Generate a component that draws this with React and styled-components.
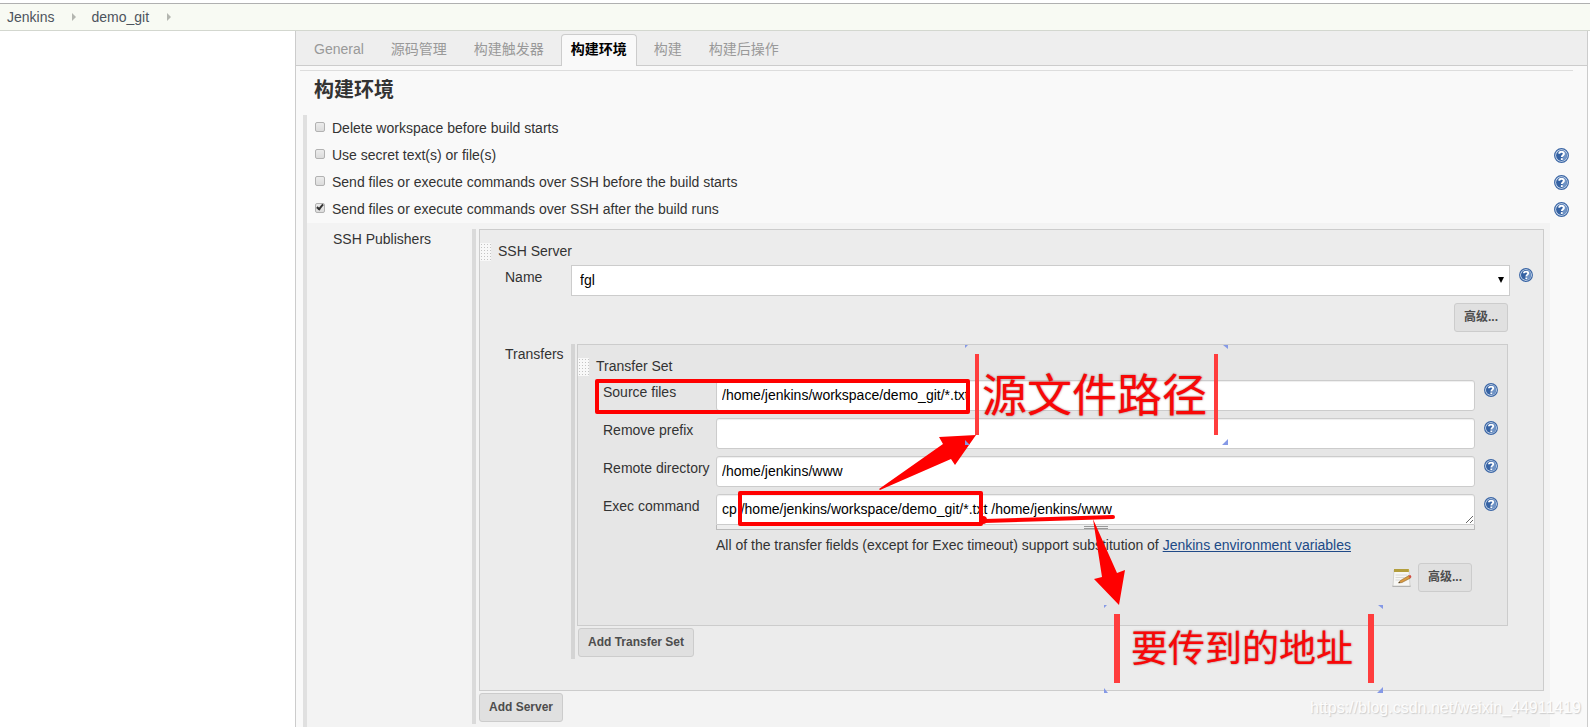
import React from "react";
import styled, { createGlobalStyle, css } from "styled-components";

const GlobalStyle = createGlobalStyle`
  *, *::before, *::after { box-sizing: border-box; }
  html, body, #root { margin: 0; }
  body {
    background: #fff;
    color: #333;
    font: 14px/18px "Liberation Sans", "Noto Sans CJK SC", sans-serif;
  }
  button, input, select, textarea { font: inherit; margin: 0; }
`;

const Page = styled.div`
  position: relative;
  display: flex;
  flex-direction: column;
  min-height: 100vh;
  padding-top: 3px;
  overflow: hidden;
`;

const Breadcrumbs = styled.nav`
  display: flex;
  align-items: center;
  height: 28px;
  padding-left: 7px;
  background: #f8faf3;
  border-top: 1px solid #b0b0b0;
  border-bottom: 1px solid #d3d7cf;
`;

const Crumb = styled.a`
  color: #4d545d;
  text-decoration: none;
`;

const CrumbArrow = styled.span`
  margin: 0 15px 0 18px;
  border-left: 4px solid #b4b6b0;
  border-top: 4px solid transparent;
  border-bottom: 4px solid transparent;
`;

const Columns = styled.div`
  display: flex;
  flex: 1;
`;

const SidePanel = styled.aside`
  flex: none;
  width: 295px;
`;

const MainPanel = styled.main`
  display: flex;
  flex-direction: column;
  flex: 1;
  min-width: 0;
  margin-right: 2px;
  background: #f9f9f9;
  border: solid #ccc;
  border-width: 0 1px;
`;

const TabBar = styled.div`
  display: flex;
  align-items: flex-end;
  gap: 7px;
  height: 35px;
  padding-left: 8px;
  background: #eee;
  border-bottom: 1px solid #ccc;
`;

const Tab = styled.button`
  height: 32px;
  margin-bottom: -1px;
  padding: 0 9px 4px;
  border: 1px solid transparent;
  border-bottom: 0;
  border-radius: 4px 4px 0 0;
  background: none;
  color: #999;
  ${(p) =>
    p.$active &&
    css`
      background: #f9f9f9;
      border-color: #ccc;
      color: #000;
      font-weight: bold;
    `}
`;

const Rule = styled.hr`
  width: auto;
  margin: 4px 14px 0 4px;
  border: 0;
  border-top: 1px solid #ddd;
`;

const SectionTitle = styled.h1`
  margin: 7px 0 13px 18px;
  font-size: 20px;
  line-height: 24px;
`;

const Section = styled.section`
  display: flex;
  flex-direction: column;
  flex: 1;
  margin-left: 7px;
  border-left: 4px solid #e0e0e0;
`;

const OptionRow = styled.div`
  display: flex;
  align-items: center;
  justify-content: space-between;
  height: 27px;
  padding: 0 18px 0 8px;
`;

const OptionLabel = styled.label`
  display: flex;
  align-items: center;
  gap: 7px;
  padding-bottom: 2px;
`;

const Checkbox = styled.input.attrs({ type: "checkbox" })`
  position: relative;
  appearance: none;
  width: 10px;
  height: 10px;
  margin-bottom: 2px;
  border: 1px solid #b2b2b2;
  border-radius: 2px;
  background: linear-gradient(#ececec, #dcdcdc);
  &:checked::after {
    content: "";
    position: absolute;
    left: 2px;
    top: -1px;
    width: 4px;
    height: 7px;
    border: solid #333;
    border-width: 0 2px 2px 0;
    transform: rotate(40deg);
  }
`;

const Publishers = styled.div`
  display: grid;
  grid-template-columns: 165px minmax(0, 1fr);
  flex: 1;
  margin-right: 37px;
  padding: 6px 6px 3px 0;
  background: #f3f3f3;
`;

const PublishersLabel = styled.span`
  padding: 1px 0 0 26px;
`;

const Repeatable = styled.div`
  align-self: start;
  border-left: 4px solid ${(p) => p.$bar};
  padding: 0 0 2px ${(p) => p.$gap}px;
`;

const Chunk = styled.div`
  padding: 13px 0 ${(p) => p.$bottom}px;
  border: 1px solid #ccc;
  background: ${(p) => p.$bg};
`;

const ChunkHeader = styled.div`
  display: flex;
  gap: 7px;
  height: 18px;
  margin-bottom: 4px;
  line-height: 16px;
`;

const DragHandle = styled.span`
  width: 11px;
  height: 18px;
  background-color: #f8f8f8;
  background-image: radial-gradient(circle, #c4c4c4 1px, transparent 1px);
  background-size: 3px 3px;
`;

const Field = styled.div`
  display: grid;
  grid-template-columns: ${(p) => p.$label}px minmax(0, 1fr) ${(p) => p.$side}px;
  margin-bottom: 7px;
`;

const FieldLabel = styled.label`
  padding: 3px 0 0 25px;
`;

const TransfersRow = styled.div`
  display: grid;
  grid-template-columns: 91px minmax(0, 1fr);
  padding-right: 35px;
`;

const TransfersLabel = styled.span`
  padding: 1px 0 0 25px;
`;

const FieldHelp = styled.span`
  padding: 3px 0 0 9px;
`;

const control = css`
  display: block;
  width: 100%;
  height: 31px;
  border: 1px solid #ccc;
  background: #fff;
  color: #000;
  outline: 0;
`;

const TextInput = styled.input.attrs({ type: "text" })`
  ${control}
  padding: 0 5px 2px;
  border-radius: 3px;
  box-shadow: inset 0 1px 1px #eee;
`;

const TextArea = styled.textarea`
  ${control}
  padding: 5px;
  border-radius: 3px 3px 0 0;
  box-shadow: inset 0 1px 1px #eee;
  overflow: hidden;
  resize: vertical;
`;

const SelectWrap = styled.div`
  position: relative;
`;

const Select = styled.select`
  ${control}
  appearance: none;
  padding: 0 8px 2px;
`;

const SelectArrow = styled.span`
  position: absolute;
  right: 6px;
  top: 12px;
  border: solid transparent;
  border-width: 6px 3px 0;
  border-top-color: #000;
`;

const ResizeBar = styled.div`
  display: flex;
  justify-content: center;
  height: 5px;
  padding-top: 1px;
  background: #eee;
  border: solid #bbb;
  border-width: 0 1px 1px;
  &::before {
    content: "";
    width: 24px;
    height: 3px;
    border: solid #999;
    border-width: 1px 0;
  }
`;

const Note = styled.p`
  margin: -1px 0 9px 138px;
`;

const NoteLink = styled.a`
  color: #204a87;
`;

const Actions = styled.div`
  display: flex;
  align-items: center;
  justify-content: flex-end;
  gap: 6px;
  padding-right: 35px;
  margin-bottom: ${(p) => p.$bottom || 0}px;
`;

const Button = styled.button`
  height: 29px;
  padding: 0 9px 1px;
  border: 1px solid #ccc;
  border-radius: 3px;
  background: #e0e0e0;
  color: #4d4d4d;
  font-size: 12px;
  font-weight: bold;
`;

const AddButton = styled(Button)`
  display: block;
  margin: 2px 0 0 ${(p) => p.$indent || 0}px;
`;

const HelpButton = styled.button`
  display: block;
  padding: 0;
  border: 0;
  background: none;
  svg { display: block; }
`;

const Markup = styled.svg`
  position: absolute;
  left: 0;
  top: 0;
  width: 100%;
  height: 100%;
  pointer-events: none;
`;

const Callout = styled.div`
  position: absolute;
  left: ${(p) => p.$x}px;
  top: ${(p) => p.$y}px;
  width: ${(p) => p.$w}px;
  height: ${(p) => p.$h}px;
  padding: 0 4px 5px 0;
  display: flex;
  align-items: center;
  justify-content: center;
  border: solid #ff3d3d;
  border-width: 0 ${(p) => p.$bar}px;
  color: #f80808;
  font: ${(p) => p.$size}px/1 "Noto Sans CJK SC", sans-serif;
  text-shadow: 0 0 2px rgba(110, 30, 30, 0.7);
  white-space: nowrap;
  pointer-events: none;
`;

const Watermark = styled.span`
  position: absolute;
  right: 9px;
  bottom: 10px;
  color: #fff;
  font-size: 16px;
  text-shadow: 1px 1px 1px #c4c4c4;
  opacity: 0.8;
  pointer-events: none;
`;

function Help({ size = 14, topic }) {
  return (
    <HelpButton type="button" aria-label={`Help for ${topic}`}>
      <svg width={size} height={size} viewBox="0 0 16 16" fill="none">
        <circle cx="8" cy="8" r="7.3" fill="#dbe6f4" stroke="#3b66a5" strokeWidth="1.3" />
        <circle cx="8" cy="8" r="5.8" fill="#3562a3" />
        <path d="M9 2.3A5.8 5.8 0 0 1 9 13.7Z" fill="#6f93c5" />
        <path d="M5.600 6C5.600 3.400 10.600 3.400 10.600 6C10.600 7.700 8.300 7.600 8.300 9.700" stroke="#fff" strokeWidth="2" />
        <path d="M7.300 10.800h2v2h-2z" fill="#fff" />
      </svg>
    </HelpButton>
  );
}

function NotepadIcon() {
  return (
    <svg width="20" height="20" viewBox="0 0 20 20" aria-hidden="true">
      <path d="M0.500 17.500h18v1.500h-18z" fill="#aaa" />
      <path d="M2 2h15l1 16H1z" fill="#f7f7f5" stroke="#c5c5c2" strokeWidth="0.7" />
      <path d="M2 1h15v3H2z" fill="#c4ae45" />
      <path d="M3 1v3M5 1v3M7 1v3M9 1v3M11 1v3M13 1v3M15 1v3" stroke="#8d7b2c" strokeWidth="0.6" />
      <path d="M3.500 7h12M3.500 9.500h9M3.500 12h5" stroke="#d0d0ce" strokeWidth="0.8" />
      <path d="M6.500 15l2-2.500L17 7.500l1.500 2.500L10 14.500z" fill="#dc9b42" stroke="#8b6426" strokeWidth="0.6" />
      <path d="M16.500 7.700l2-.7 1 2-1.500 1.200z" fill="#d34b42" />
      <path d="M6.500 15l.9-1.200.9.900z" fill="#333" />
    </svg>
  );
}

const tabs = ["General", "源码管理", "构建触发器", "构建环境", "构建", "构建后操作"];

const options = [
  { text: "Delete workspace before build starts" },
  { text: "Use secret text(s) or file(s)", help: true },
  { text: "Send files or execute commands over SSH before the build starts", help: true },
  { text: "Send files or execute commands over SSH after the build runs", help: true, checked: true },
];

const transferFields = [
  { id: "source", label: "Source files", value: "/home/jenkins/workspace/demo_git/*.txt" },
  { id: "prefix", label: "Remove prefix", value: "" },
  { id: "remote", label: "Remote directory", value: "/home/jenkins/www" },
];

function TransferSet() {
  return (
    <Chunk $bg="#e6e6e6" $bottom={33}>
      <ChunkHeader>
        <DragHandle />
        Transfer Set
      </ChunkHeader>
      {transferFields.map((f) => (
        <Field key={f.id} $label={138} $side={32}>
          <FieldLabel htmlFor={f.id}>{f.label}</FieldLabel>
          <TextInput id={f.id} defaultValue={f.value} />
          <FieldHelp>
            <Help topic={f.label} />
          </FieldHelp>
        </Field>
      ))}
      <Field $label={138} $side={32}>
        <FieldLabel htmlFor="exec">Exec command</FieldLabel>
        <div>
          <TextArea id="exec" defaultValue="cp /home/jenkins/workspace/demo_git/*.txt /home/jenkins/www" />
          <ResizeBar />
        </div>
        <FieldHelp>
          <Help topic="Exec command" />
        </FieldHelp>
      </Field>
      <Note>
        All of the transfer fields (except for Exec timeout) support substitution of{" "}
        <NoteLink href="#env">Jenkins environment variables</NoteLink>
      </Note>
      <Actions>
        <NotepadIcon />
        <Button type="button">高级...</Button>
      </Actions>
    </Chunk>
  );
}

function Annotations() {
  return (
    <>
      <Markup aria-hidden="true">
        <g fill="none" stroke="#f00" strokeWidth="4" strokeLinejoin="round" strokeLinecap="round">
          <rect x="597" y="381" width="371" height="31" />
          <rect x="740" y="493" width="241" height="31" />
          <path d="M984 521L1050 519L1113 517" />
        </g>
        <g fill="#f00">
          <circle cx="983" cy="520" r="4" />
          <path d="M879 489L943 444L939 437L976 435L955 465L951 459L880 490Z" />
          <path d="M1093 519L1117 573L1125 570L1119 605L1094 579L1102 577Z" />
        </g>
        <g fill="#8599e6">
          <path d="M965 345h3l-3 3zM1223 345h5v4zM965 440l5 5h-5zM1228 439v6h-6z" />
          <path d="M1104 605h3l-3 3zM1378 605h5v4zM1104 688l4 5h-4zM1383 687v6h-6z" />
        </g>
      </Markup>
      <Callout $x={975} $y={354} $w={243} $h={81} $bar={4} $size={45}>
        源文件路径
      </Callout>
      <Callout $x={1114} $y={614} $w={260} $h={69} $bar={6} $size={37}>
        要传到的地址
      </Callout>
    </>
  );
}

export default function App() {
  return (
    <Page lang="zh-CN">
      <GlobalStyle />
      <Breadcrumbs>
        <Crumb href="#jenkins">Jenkins</Crumb>
        <CrumbArrow />
        <Crumb href="#demo_git">demo_git</Crumb>
        <CrumbArrow />
      </Breadcrumbs>
      <Columns>
        <SidePanel />
        <MainPanel>
          <TabBar>
            {tabs.map((t) => (
              <Tab key={t} type="button" $active={t === "构建环境"}>
                {t}
              </Tab>
            ))}
          </TabBar>
          <Rule />
          <SectionTitle>构建环境</SectionTitle>
          <Section>
            {options.map((o) => (
              <OptionRow key={o.text}>
                <OptionLabel>
                  <Checkbox defaultChecked={o.checked} />
                  {o.text}
                </OptionLabel>
                {o.help && <Help size={15} topic={o.text} />}
              </OptionRow>
            ))}
            <Publishers>
              <PublishersLabel>SSH Publishers</PublishersLabel>
              <Repeatable $bar="#dadada" $gap={3}>
                <Chunk $bg="#ececec" $bottom={31}>
                  <ChunkHeader>
                    <DragHandle />
                    SSH Server
                  </ChunkHeader>
                  <Field $label={91} $side={33}>
                    <FieldLabel htmlFor="server">Name</FieldLabel>
                    <SelectWrap>
                      <Select id="server">
                        <option>fgl</option>
                      </Select>
                      <SelectArrow />
                    </SelectWrap>
                    <FieldHelp>
                      <Help topic="Name" />
                    </FieldHelp>
                  </Field>
                  <Actions $bottom={12}>
                    <Button type="button">高级...</Button>
                  </Actions>
                  <TransfersRow>
                    <TransfersLabel>Transfers</TransfersLabel>
                    <Repeatable $bar="#d4d4d4" $gap={2}>
                      <TransferSet />
                      <AddButton type="button" $indent={1}>
                        Add Transfer Set
                      </AddButton>
                    </Repeatable>
                  </TransfersRow>
                </Chunk>
                <AddButton type="button">Add Server</AddButton>
              </Repeatable>
            </Publishers>
          </Section>
        </MainPanel>
      </Columns>
      <Annotations />
      <Watermark>https://blog.csdn.net/weixin_44911419</Watermark>
    </Page>
  );
}
